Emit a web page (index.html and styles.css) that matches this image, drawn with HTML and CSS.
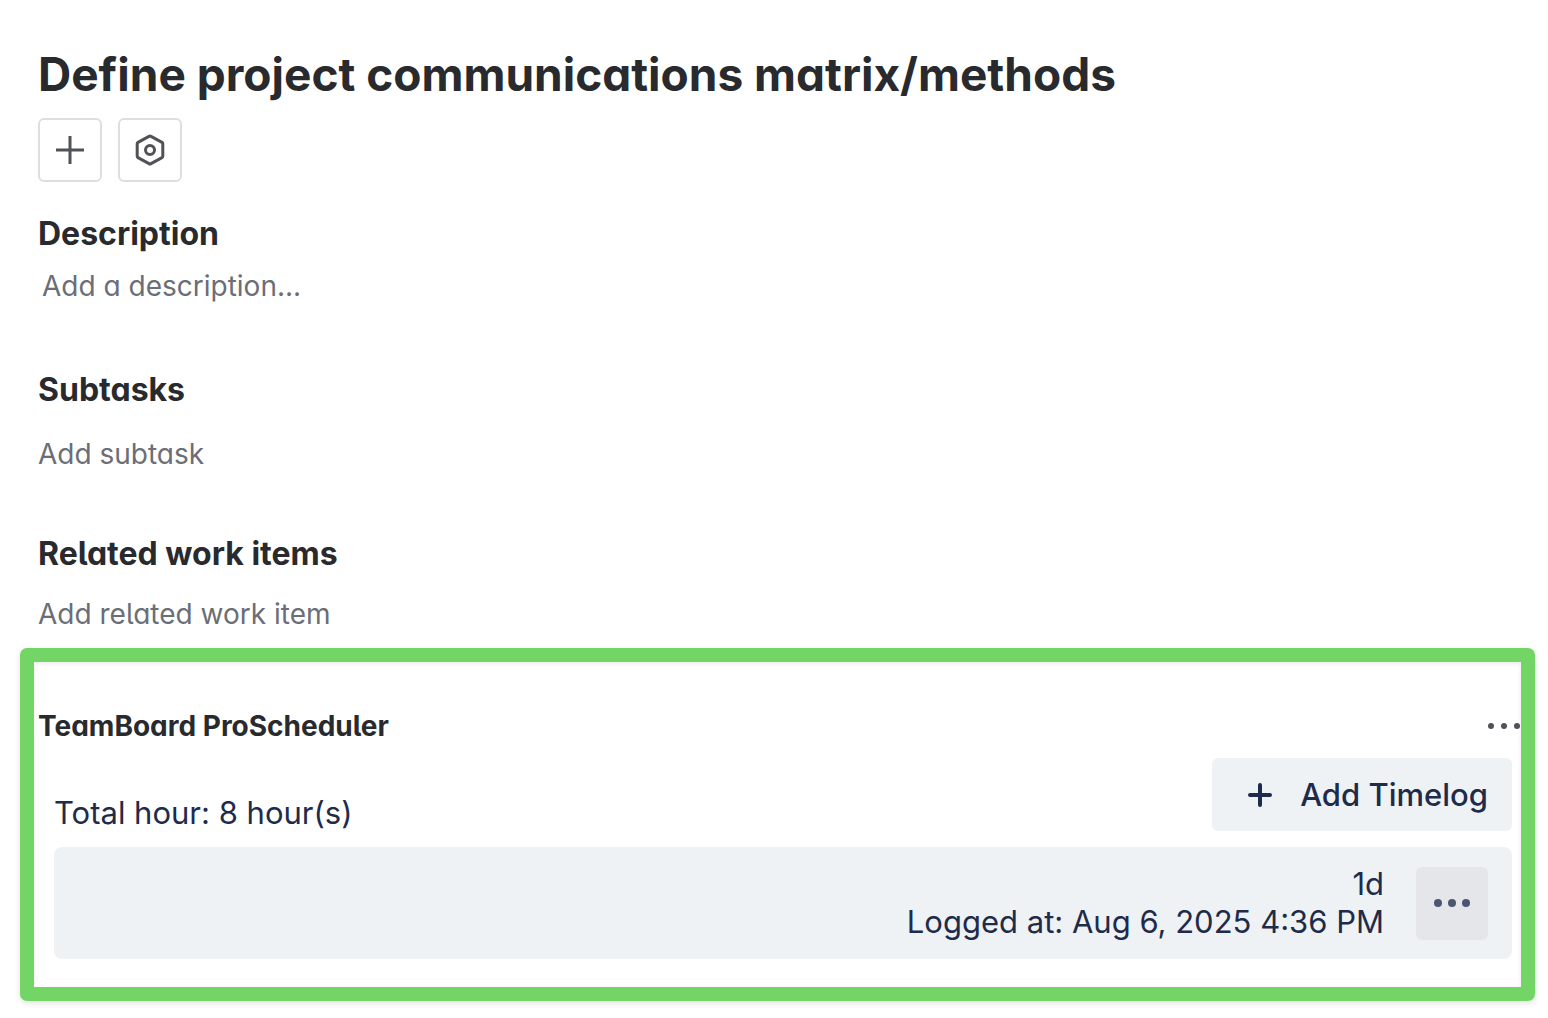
FILE: index.html
```
<!DOCTYPE html>
<html lang="en">
<head>
  <meta charset="UTF-8" />
  <meta name="viewport" content="width=device-width, initial-scale=1.0" />
  <title>Define project communications matrix/methods</title>
  <link rel="stylesheet" href="styles.css">
</head>
<body>
  <main>
    <header class="issue-header">
      <h1>Define project communications matrix/methods</h1>
      <div class="actions">
        <button class="icon-button" aria-label="Add">
          <svg width="32" height="32" viewBox="0 0 32 32" fill="none" stroke="currentColor" stroke-width="3">
            <path d="M16 2v28M2 16h28" />
          </svg>
        </button>
        <button class="icon-button" aria-label="Apps">
          <svg width="32" height="32" viewBox="0 0 32 32" fill="none" stroke="currentColor" stroke-width="3" stroke-linejoin="round">
            <path d="M15 2.4a2 2 0 0 1 2 0L28 8.4a1.5 1.5 0 0 1 .8 1.3v12.6a1.5 1.5 0 0 1-.8 1.3L17 29.6a2 2 0 0 1-2 0L4 23.6a1.5 1.5 0 0 1-.8-1.3V9.7a1.5 1.5 0 0 1 .8-1.3z" />
            <circle cx="16" cy="16" r="4.5" />
          </svg>
        </button>
      </div>
    </header>

    <section class="description">
      <h2>Description</h2>
      <button class="placeholder">Add a description...</button>
    </section>

    <section class="subtasks">
      <h2>Subtasks</h2>
      <button class="placeholder">Add subtask</button>
    </section>

    <section class="related">
      <h2>Related work items</h2>
      <button class="placeholder">Add related work item</button>
    </section>

    <section class="scheduler">
      <div class="scheduler-header">
        <h3>TeamBoard ProScheduler</h3>
        <button class="more" aria-label="More actions">
          <svg width="34" height="8" viewBox="0 0 34 8" fill="currentColor">
            <circle cx="4" cy="4" r="3" />
            <circle cx="17" cy="4" r="3" />
            <circle cx="30" cy="4" r="3" />
          </svg>
        </button>
      </div>

      <div class="timelog">
        <div class="timelog-top">
          <div class="total">Total hour: 8 hour(s)</div>
          <button class="add-timelog">
            <svg width="24" height="24" viewBox="0 0 24 24" fill="none" stroke="currentColor" stroke-width="4" stroke-linecap="round">
              <path d="M12 2v20M2 12h20" />
            </svg>
            Add Timelog
          </button>
        </div>
        <div class="log">
          <div class="log-text">
            <div>1d</div>
            <div>Logged at: Aug 6, 2025 4:36 PM</div>
          </div>
          <button class="log-more" aria-label="Timelog actions">
            <svg width="36" height="8" viewBox="0 0 36 8" fill="currentColor">
              <circle cx="4" cy="4" r="4" />
              <circle cx="18" cy="4" r="4" />
              <circle cx="32" cy="4" r="4" />
            </svg>
          </button>
        </div>
      </div>
    </section>
  </main>
</body>
</html>
```
FILE: styles.css
```
:root {
  --text: #292a2e;
  --subtle: #6b6e76;
  --icon: #505258;
  --navy: #1e2b4a;
  --panel: #eff2f4;
  --highlight: #73d566;
}

* {
  box-sizing: border-box;
}

body {
  margin: 0;
  padding-top: 46px;
  background: #fff;
  color: var(--text);
  font-family: Inter, "Liberation Sans", sans-serif;
  font-feature-settings: "cv11", "cv05";
}

h1,
h2,
h3 {
  margin: 0;
  font-weight: 700;
  line-height: 40px;
}

h1 {
  font-size: 46px;
  line-height: 56px;
}

h2 {
  font-size: 32px;
}

h3 {
  font-size: 28px;
}

button {
  padding: 0;
  border: none;
  background: none;
  color: inherit;
  font: inherit;
  font-feature-settings: inherit;
  cursor: pointer;
}

svg {
  display: block;
}

.issue-header,
.description,
.subtasks,
.related {
  display: flex;
  flex-direction: column;
  align-items: flex-start;
  padding: 0 38px;
}

.issue-header {
  gap: 16px;
}

.actions {
  display: flex;
  gap: 16px;
}

.icon-button {
  display: flex;
  align-items: center;
  justify-content: center;
  width: 64px;
  height: 64px;
  border: 2px solid #dddee1;
  border-radius: 6px;
  color: var(--icon);
}

.placeholder {
  color: var(--subtle);
  font-size: 28px;
  line-height: 40px;
}

.description {
  margin-top: 32px;
  gap: 12px;
}

.description .placeholder {
  padding-left: 4px;
}

.subtasks {
  margin-top: 64px;
  gap: 24px;
}

.related {
  margin-top: 60px;
  gap: 20px;
}

.scheduler {
  margin: 14px 13px 16px 20px;
  padding: 44px 0 28px;
  border: 14px solid var(--highlight);
  border-radius: 7px;
  box-shadow: 0 2px 6px rgba(0, 0, 0, 0.12), inset 0 2px 4px rgba(0, 0, 0, 0.08);
}

.scheduler-header {
  display: flex;
  align-items: center;
  justify-content: space-between;
  padding-left: 4px;
}

.more {
  color: var(--icon);
}

.timelog {
  padding: 12px 9px 0 20px;
  color: var(--navy);
  font-size: 31px;
  line-height: 38px;
  font-feature-settings: normal;
}

.timelog-top {
  display: flex;
  align-items: flex-end;
  justify-content: space-between;
  margin-bottom: 16px;
}

.total {
  line-height: 36px;
}

.add-timelog {
  display: flex;
  align-items: center;
  gap: 28px;
  height: 73px;
  padding: 0 24px 0 36px;
  border-radius: 6px;
  background: var(--panel);
  font-weight: 500;
}

.log {
  display: flex;
  align-items: center;
  justify-content: flex-end;
  gap: 32px;
  padding: 18px 24px;
  border-radius: 8px;
  background: var(--panel);
}

.log-text {
  text-align: right;
}

.log-more {
  display: flex;
  align-items: center;
  justify-content: center;
  width: 72px;
  height: 73px;
  border-radius: 6px;
  background: #e4e6ea;
  color: #4a5672;
}
```
